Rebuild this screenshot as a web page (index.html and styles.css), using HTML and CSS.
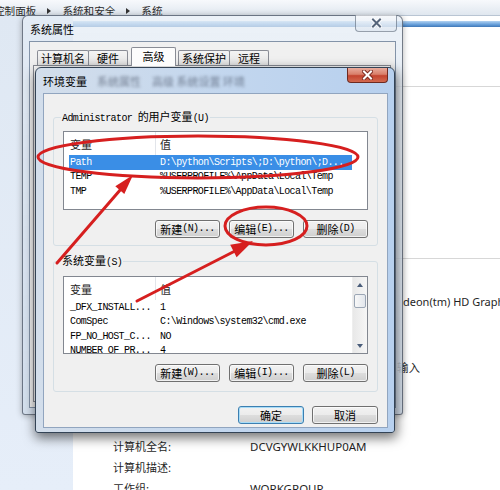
FILE: index.html
```html
<!DOCTYPE html>
<html lang="zh-CN">
<head>
<meta charset="utf-8">
<title>环境变量</title>
<link rel="stylesheet" href="styles.css">
</head>
<body>
<div class="desktop">
  <div class="cp">
    <div class="crumbs">
      <span class="cut">控制面板</span><span class="arr"></span><span>系统和安全</span><span class="arr"></span><span>系统</span>
    </div>
    <div class="cp-body">
      <div class="nav"></div>
      <div class="main">
        <div class="stripe"></div>
        <div class="rule rule1"></div>
        <div class="rule rule2"></div>
        <div class="side side1">deon(tm) HD Graphics</div>
        <div class="side side2">输入</div>
        <div class="info">
          <div class="irow"><span class="ilabel">计算机全名:</span><span class="ival">DCVGYWLKKHUP0AM</span></div>
          <div class="irow"><span class="ilabel">计算机描述:</span><span class="ival"></span></div>
          <div class="irow"><span class="ilabel">工作组:</span><span class="ival">WORKGROUP</span></div>
        </div>
      </div>
    </div>
  </div>

  <div class="win sys">
    <div class="tbar">
      <span class="ttl">系统属性</span>
      <span class="close">
        <svg class="xic" viewBox="0 0 11 10" width="11" height="10"><path class="xo" d="M2 1.5L9 8.5M9 1.5L2 8.5"/><path class="xi" d="M2 1.5L9 8.5M9 1.5L2 8.5"/></svg>
      </span>
    </div>
    <div class="client">
      <div class="tabs">
        <span class="tab">计算机名</span>
        <span class="tab">硬件</span>
        <span class="tab sel">高级</span>
        <span class="tab">系统保护</span>
        <span class="tab">远程</span>
      </div>
      <div class="panel"></div>
    </div>
  </div>

  <div class="win env">
    <div class="tbar">
      <span class="ttl">环境变量</span>
      <span class="ghost">系统属性　高级 系统设置 环境</span>
      <span class="close red">
        <svg class="xic" viewBox="0 0 11 10" width="11" height="10"><path class="xo" d="M2 1.5L9 8.5M9 1.5L2 8.5"/><path class="xi" d="M2 1.5L9 8.5M9 1.5L2 8.5"/></svg>
      </span>
    </div>
    <div class="client">
      <fieldset class="grp g1">
        <legend><span class="m">Administrator </span>的用户变量<span class="m">(U)</span></legend>
        <div class="list l1">
          <div class="lv">
            <div class="hdr"><span class="c1">变量</span><span class="c2">值</span></div>
            <div class="row sel"><span class="c1">Path</span><span class="c2">D:\python\Scripts\;D:\python\;D...</span></div>
            <div class="row"><span class="c1">TEMP</span><span class="c2">%USERPROFILE%\AppData\Local\Temp</span></div>
            <div class="row"><span class="c1">TMP</span><span class="c2">%USERPROFILE%\AppData\Local\Temp</span></div>
          </div>
        </div>
        <div class="btns">
          <span class="btn">新建<span class="m">(N)...</span></span>
          <span class="btn">编辑<span class="m">(E)...</span></span>
          <span class="btn">删除<span class="m">(D)</span></span>
        </div>
      </fieldset>

      <fieldset class="grp g2">
        <legend>系统变量<span class="m">(S)</span></legend>
        <div class="list l2">
          <div class="lv">
            <div class="hdr"><span class="c1">变量</span><span class="c2">值</span></div>
            <div class="row"><span class="c1">_DFX_INSTALL...</span><span class="c2">1</span></div>
            <div class="row"><span class="c1">ComSpec</span><span class="c2">C:\Windows\system32\cmd.exe</span></div>
            <div class="row"><span class="c1">FP_NO_HOST_C...</span><span class="c2">NO</span></div>
            <div class="row"><span class="c1">NUMBER_OF_PR...</span><span class="c2">4</span></div>
          </div>
          <div class="sb">
            <div class="sb-btn"><span class="up"></span></div>
            <div class="track"><div class="thumb"></div></div>
            <div class="sb-btn"><span class="dn"></span></div>
          </div>
        </div>
        <div class="btns">
          <span class="btn">新建<span class="m">(W)...</span></span>
          <span class="btn">编辑<span class="m">(I)...</span></span>
          <span class="btn">删除<span class="m">(L)</span></span>
        </div>
      </fieldset>

      <div class="foot">
        <span class="btn primary">确定</span>
        <span class="btn">取消</span>
      </div>
    </div>
  </div>

  <svg class="marks" viewBox="0 0 500 490" width="500" height="490">
    <g fill="none" stroke="#d61f1f" stroke-width="3" stroke-linecap="round">
      <ellipse cx="198" cy="157" rx="160" ry="21"/>
      <ellipse cx="266" cy="226" rx="41" ry="19"/>
      <line x1="57" y1="263" x2="121" y2="189"/>
      <line x1="137" y1="301" x2="235" y2="251"/>
    </g>
    <g fill="#d61f1f">
      <polygon points="133,175 124.3,194 115.3,186.2"/>
      <polygon points="253,241 236.6,257.2 230.2,244.8"/>
    </g>
  </svg>
</div>
</body>
</html>
```

FILE: styles.css
```css
html, body {
  margin: 0;
  padding: 0;
}

body {
  width: 500px;
  height: 490px;
  overflow: hidden;
  background: #fff;
  font-family: "Noto Sans CJK SC", "Noto Sans", sans-serif;
  font-size: 11px;
  color: #000;
}

.desktop {
  position: relative;
  width: 500px;
  height: 490px;
  overflow: hidden;
}

/* ---------- control panel background ---------- */
.cp {
  display: flex;
  flex-direction: column;
  height: 100%;
}

.crumbs {
  box-sizing: border-box;
  height: 16px;
  padding-top: 5px;
  display: flex;
  align-items: flex-start;
  gap: 11px;
  line-height: 12px;
  font-size: 10.6px;
  color: #2b2b2b;
  white-space: nowrap;
  background: linear-gradient(#f7f9fc, #e0e7ef);
  border-bottom: 1px solid #b9c5d3;
  flex-shrink: 0;
}

.crumbs .cut {
  margin-left: -6px;
}

.arr {
  width: 0;
  height: 0;
  border-left: 4px solid #333;
  border-top: 3.5px solid transparent;
  border-bottom: 3.5px solid transparent;
  margin-top: 3px;
}

.cp-body {
  flex: 1;
  display: flex;
  min-height: 0;
}

.nav {
  width: 73px;
  flex-shrink: 0;
  background: linear-gradient(#dfe8f3, #e6eef9);
}

.main {
  flex: 1;
  display: flex;
  flex-direction: column;
  min-width: 0;
  overflow: hidden;
}

.main > * {
  flex-shrink: 0;
}

.stripe {
  margin-top: 5px;
  height: 6px;
  background: linear-gradient(#b3d2f1, #6aa2dc 55%, #3f78b8);
}

.rule {
  height: 1px;
  background: #d7d7d7;
}

.rule1 { margin-top: 59px; }
.rule2 { margin-top: 171px; }

.side {
  white-space: nowrap;
  line-height: 14px;
  height: 14px;
  font-family: "Noto Sans", "Noto Sans CJK SC", sans-serif;
  font-size: 11px;
  color: #1f1f1f;
}

.side1 { margin-top: 36px; padding-left: 330px; }
.side2 { margin-top: 52px; padding-left: 324px; font-size: 11.5px; }

.info {
  margin-top: 61px;
  padding-left: 40px;
}

.irow {
  display: flex;
  height: 21px;
  line-height: 21px;
  color: #1f1f1f;
  white-space: nowrap;
}

.ilabel { width: 137px; }

.ival {
  font-family: "Noto Sans", sans-serif;
  font-size: 11.5px;
}

/* ---------- windows ---------- */
.win {
  position: absolute;
  box-sizing: border-box;
  display: flex;
  flex-direction: column;
  border-radius: 6px 6px 3px 3px;
}

.sys {
  left: 22px;
  top: 15px;
  width: 381px;
  height: 400px;
  border: 1px solid rgba(50, 60, 75, 0.65);
  background: linear-gradient(rgba(228, 236, 245, 0.72), rgba(210, 222, 237, 0.86));
  box-shadow: 0 1px 6px rgba(0, 0, 0, 0.3);
}

.env {
  left: 35px;
  top: 67px;
  width: 360px;
  height: 366px;
  border: 1px solid #334355;
  background: linear-gradient(90deg, #d3deeb 0, #c2d6ee 55%, #b7d0ee 100%);
  box-shadow: 1px 4px 12px 1px rgba(0, 0, 0, 0.55);
}

.tbar {
  height: 25px;
  display: flex;
  align-items: center;
  flex-shrink: 0;
  min-width: 0;
}

.sys .tbar { padding: 0 5px 0 7px; }
.env .tbar { padding: 0 6px 0 7px; }

.ttl {
  font-size: 11px;
  white-space: nowrap;
  color: #000;
}

.ghost {
  margin-left: 10px;
  white-space: nowrap;
  filter: blur(1.4px);
  color: rgba(40, 50, 70, 0.55);
  font-size: 11px;
}

.close {
  margin-left: auto;
  align-self: flex-start;
  display: flex;
  align-items: center;
  justify-content: center;
  box-sizing: border-box;
  border-radius: 0 0 4px 4px;
  flex-shrink: 0;
}

.sys .close {
  width: 42px;
  height: 17px;
  margin-top: -1px;
  border: 1px solid rgba(70, 85, 105, 0.55);
  border-top: none;
  background: linear-gradient(rgba(255, 255, 255, 0.6), rgba(215, 224, 236, 0.5));
}

.env .close {
  width: 41px;
  height: 15px;
  border: 1px solid #6e2a20;
  border-top: none;
  background: linear-gradient(#e9ab9c 0, #d97f6a 45%, #c4442f 55%, #d2694f 100%);
}

.xic path {
  fill: none;
  stroke-linecap: square;
}

.xic .xo { stroke-width: 4; }
.xic .xi { stroke-width: 2; }

.sys .xo { stroke: rgba(255, 255, 255, 0.85); }
.sys .xi { stroke: #55657b; }
.env .xo { stroke: #7d2b20; }
.env .xi { stroke: #fff; }

/* ---------- system properties client ---------- */
.sys .client {
  flex: 1;
  margin: 0 6px 6px 6px;
  background: #f0f0f0;
  border: 1px solid #8393a8;
  display: flex;
  flex-direction: column;
  min-height: 0;
}

.tabs {
  display: flex;
  align-items: flex-end;
  height: 19px;
  padding: 5px 0 0 7px;
  flex-shrink: 0;
}

.tab {
  box-sizing: border-box;
  height: 16px;
  min-width: 40px;
  padding: 0 3px;
  margin-right: -1px;
  border: 1px solid #898c95;
  border-bottom: none;
  border-radius: 2px 2px 0 0;
  background: linear-gradient(#f4f4f4, #e3e3e3);
  text-align: center;
  line-height: 15px;
  white-space: nowrap;
}

.tab.sel {
  height: 19px;
  min-width: 45px;
  margin: 0 2px 0 4px;
  background: #fcfcfc;
  line-height: 17px;
  position: relative;
  z-index: 1;
}

.panel {
  flex: 1;
  margin: -1px 4px 5px 3px;
  border: 1px solid #898c95;
  background: #fcfcfc;
}

/* ---------- environment variables client ---------- */
.env .client {
  flex: 1;
  margin: 0 6px 4px 7px;
  background: #f0f0f0;
  border: 1px solid #91a5bf;
  padding: 0 9px;
  display: flex;
  flex-direction: column;
  min-height: 0;
}

.env .client > * {
  flex-shrink: 0;
}

.grp {
  margin: 0;
  min-width: 0;
  border: 1px solid #d5dfe5;
  border-radius: 3px;
  padding: 5px 9px 7px 9px;
}

.g1 { margin-top: 15px; }
.g2 { margin-top: 7px; padding: 6px 9px 9px 9px; }

legend {
  padding: 0 1px;
  margin-left: -2px;
  line-height: 14px;
  font-size: 11px;
  white-space: nowrap;
}

.m {
  font-family: "Liberation Mono", monospace;
  font-size: 10px;
  letter-spacing: -0.6px;
  white-space: pre;
}

.list {
  box-sizing: border-box;
  border: 1px solid #828790;
  background: #fff;
  display: flex;
  overflow: hidden;
}

.l1 { height: 79px; }
.l2 { height: 78px; }

.lv {
  flex: 1;
  min-width: 0;
  overflow: hidden;
}

.hdr {
  display: flex;
  height: 23px;
  align-items: center;
  color: #1e1e1e;
}

.hdr .c1 {
  box-sizing: border-box;
  width: 92px;
  height: 100%;
  padding-left: 6px;
  display: flex;
  align-items: center;
  border-right: 1px solid #e2e5ea;
}

.hdr .c2 { padding-left: 4px; }

.row {
  display: flex;
  align-items: center;
  height: 14.5px;
  margin-left: 5px;
  width: 283px;
  white-space: nowrap;
  font-family: "Liberation Mono", monospace;
  font-size: 10px;
  letter-spacing: -0.6px;
  color: #000;
}

.row .c1 {
  box-sizing: border-box;
  width: 91px;
  padding-left: 1px;
  flex-shrink: 0;
}

.row.sel {
  background: #3a8ee6;
  color: #fff;
}

.sb {
  box-sizing: border-box;
  width: 15px;
  flex-shrink: 0;
  display: flex;
  flex-direction: column;
  background: linear-gradient(90deg, #e8e8e8, #f6f6f6);
  border-left: 1px solid #eeeeee;
}

.sb-btn {
  height: 15px;
  display: flex;
  align-items: center;
  justify-content: center;
  flex-shrink: 0;
}

.up, .dn {
  width: 0;
  height: 0;
  border-left: 3.5px solid transparent;
  border-right: 3.5px solid transparent;
}

.up { border-bottom: 4px solid #4a5d7a; }
.dn { border-top: 4px solid #4a5d7a; }

.track { flex: 1; }

.thumb {
  box-sizing: border-box;
  margin: 2px 1px 0;
  height: 14px;
  border: 1px solid #9ba6b5;
  border-radius: 2px;
  background: linear-gradient(90deg, #f8f8f8, #e2e6ec);
}

.btns {
  display: flex;
  justify-content: flex-end;
  gap: 9px;
  margin-top: 10px;
}

.btn {
  box-sizing: border-box;
  width: 65px;
  height: 18px;
  display: flex;
  align-items: center;
  justify-content: center;
  border: 1px solid #707070;
  border-radius: 3px;
  background: linear-gradient(#f2f2f2 0, #ebebeb 50%, #dddddd 51%, #cfcfcf 100%);
  box-shadow: inset 0 0 0 1px rgba(255, 255, 255, 0.7);
  font-size: 11px;
  line-height: 14px;
  white-space: nowrap;
}

.foot {
  display: flex;
  justify-content: flex-end;
  gap: 8px;
  margin-top: 14px;
}

.foot .btn { width: 66px; }

.btn.primary {
  border-color: #3c7fb1;
  box-shadow: inset 0 0 0 1px #a8dcf7;
}

/* ---------- annotations ---------- */
.marks {
  position: absolute;
  left: 0;
  top: 0;
  width: 500px;
  height: 490px;
  pointer-events: none;
}
```
